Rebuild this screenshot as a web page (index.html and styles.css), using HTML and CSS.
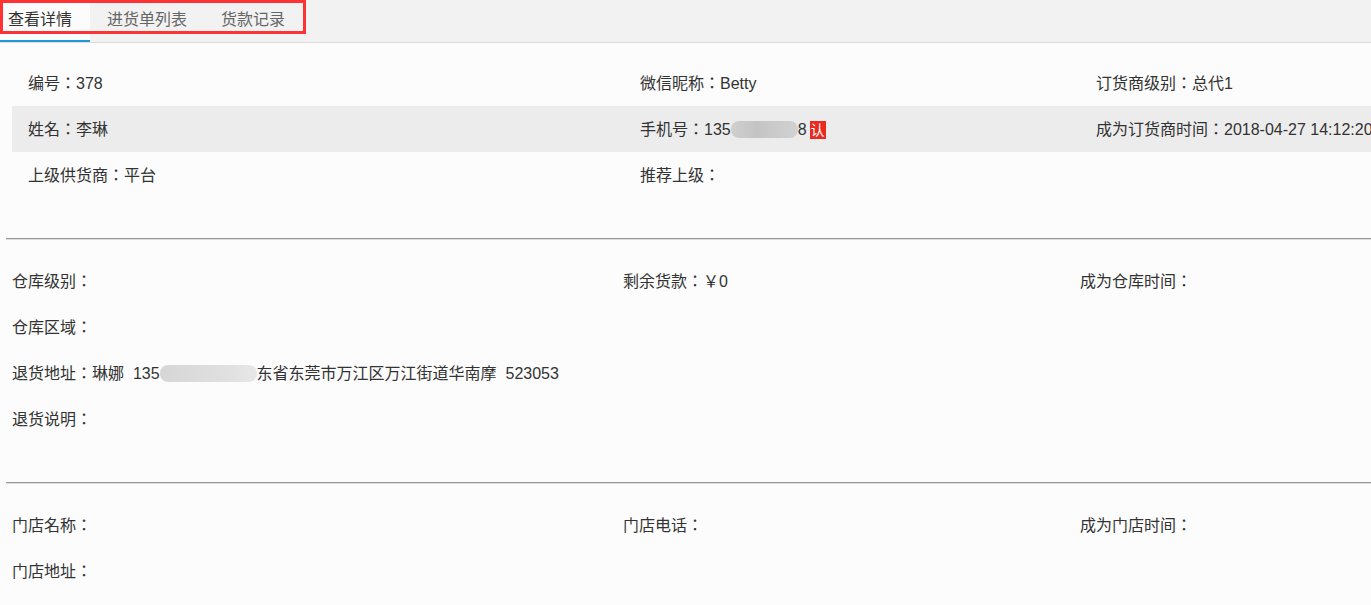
FILE: index.html
```html
<!DOCTYPE html>
<html lang="zh-CN">
<head>
    <meta charset="UTF-8">
    <meta name="viewport" content="width=device-width, initial-scale=1.0">
    <title>订货商详情</title>
    <link rel="stylesheet" href="styles.css">
</head>
<body>
    <header class="tabs">
        <a class="tab active">查看详情</a>
        <a class="tab">进货单列表</a>
        <a class="tab">货款记录</a>
        <div class="mark"></div>
    </header>

    <section class="block block-top">
        <div class="row">
            <span>编号：378</span>
            <span>微信昵称：Betty</span>
            <span>订货商级别：总代1</span>
        </div>
        <div class="row row-grey">
            <span>姓名：李琳</span>
            <span>手机号：135<i class="blur blur-phone"></i>8<b class="badge">认</b></span>
            <span>成为订货商时间：2018-04-27 14:12:20</span>
        </div>
        <div class="row">
            <span>上级供货商：平台</span>
            <span>推荐上级：</span>
            <span></span>
        </div>
    </section>

    <hr class="divider">

    <section class="block">
        <div class="row">
            <span>仓库级别：</span>
            <span>剩余货款：￥0</span>
            <span>成为仓库时间：</span>
        </div>
        <div class="row row-wide">仓库区域：</div>
        <div class="row row-wide">退货地址：琳娜&nbsp;&nbsp;135<i class="blur blur-addr"></i>东省东莞市万江区万江街道华南摩&nbsp;&nbsp;523053</div>
        <div class="row row-wide">退货说明：</div>
    </section>

    <hr class="divider">

    <section class="block">
        <div class="row">
            <span>门店名称：</span>
            <span>门店电话：</span>
            <span>成为门店时间：</span>
        </div>
        <div class="row row-wide">门店地址：</div>
    </section>
</body>
</html>
```

FILE: styles.css
```css
body {
    margin: 0;
    background-color: #fcfcfc;
    color: #333;
    font-family: "Liberation Sans", "Noto Sans CJK JP", sans-serif;
    font-feature-settings: "locl" 0;
    font-size: 16px;
    overflow: hidden;
}

.tabs {
    position: relative;
    display: flex;
    height: 42px;
    background-color: #f2f2f2;
    border-bottom: 1px solid #dcdcdc;
}

.tab {
    padding: 0 17px;
    line-height: 40px;
    color: #666;
    border-bottom: 2px solid transparent;
}

.tab:first-child {
    padding-left: 8px;
    padding-right: 18px;
}

.tab.active {
    color: #333;
    background-color: #fcfcfc;
    border-bottom-color: #1a9ad6;
}

/* annotation box drawn over the tabs */
.mark {
    position: absolute;
    left: 0;
    top: 0;
    width: 300px;
    height: 28px;
    border: 3px solid #f33;
}

.block {
    padding: 18px 0 40px;
}

.block-top {
    padding-top: 17px;
}

.row {
    display: grid;
    grid-template-columns: 611px 457px 1fr;
    height: 46px;
    line-height: 47px;
    padding-left: 12px;
    white-space: nowrap;
    overflow: hidden;
}

.block-top .row {
    margin-left: 12px;
    padding-left: 16px;
    grid-template-columns: 612px 456px 1fr;
}

.row-grey {
    background-color: #ececec;
}

.row-wide {
    display: block;
}

.divider {
    margin: 0 0 0 6px;
    height: 0;
    border: 0;
    border-top: 1px solid #999;
    border-bottom: 1px solid #ddd;
}

.blur {
    display: inline-block;
    height: 17px;
    vertical-align: -3px;
    border-radius: 8px;
}

.blur-phone {
    width: 67px;
    background: linear-gradient(90deg, #cfcfcf, #c4c4c4 40%, #cbcbcb 70%, #d2d2d2);
}

.blur-addr {
    width: 97px;
    background: linear-gradient(90deg, #d6d6d6, #dcdcdc 40%, #e0e0e0 70%, #e8e8e8);
}

.badge {
    display: inline-block;
    margin-left: 3px;
    padding: 0 1px;
    line-height: 18px;
    font-size: 14px;
    font-weight: normal;
    color: #fff;
    background-color: #ea2a1f;
}
```
